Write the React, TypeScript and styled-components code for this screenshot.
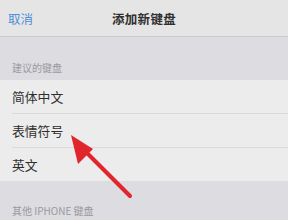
import React from 'react'
import styled, { createGlobalStyle } from 'styled-components'

const GlobalStyle = createGlobalStyle`
  html, body {
    margin: 0;
    padding: 0;
    background: #ffffff;
  }
  body {
    font-family: "Noto Sans CJK SC", "Noto Sans", sans-serif;
  }
`

const suggested = ['简体中文', '表情符号', '英文']

const Screen = styled.div`
  position: relative;
  width: 288px;
  height: 220px;
  overflow: hidden;
  display: flex;
  flex-direction: column;
  background: #dcdce1;
`

const NavBar = styled.div`
  height: 36px;
  flex-shrink: 0;
  display: grid;
  grid-template-columns: 1fr auto 1fr;
  align-items: center;
  padding: 0 8px;
  background: #e5e5e6;
  border-bottom: 1px solid #c9c9cc;
`

const NavButton = styled.span`
  font-size: 12.5px;
  color: #4e8fd8;
  justify-self: start;
`

const NavTitle = styled.span`
  font-size: 12.5px;
  font-weight: 700;
  color: #2f2f2f;
  letter-spacing: 0.3px;
`

const SectionHeader = styled.div<{ $height: number }>`
  height: ${(p) => p.$height}px;
  flex-shrink: 0;
  display: flex;
  align-items: flex-end;
  padding: 0 0 5px 12px;
  box-sizing: border-box;
  font-size: 10px;
  color: #9a9a9e;
`

const List = styled.div`
  background: #ececec;
  flex-shrink: 0;
`

const Row = styled.div`
  height: 33px;
  display: flex;
  align-items: center;
  margin-left: 12px;
  font-size: 12.8px;
  color: #2e2e2e;
  & + & {
    border-top: 1px solid #d9d9d9;
  }
`

const Overlay = styled.svg`
  position: absolute;
  left: 0;
  top: 0;
  pointer-events: none;
`

const App = () => {
  return (
    <>
      <GlobalStyle />
      <Screen>
        <NavBar>
          <NavButton>取消</NavButton>
          <NavTitle>添加新键盘</NavTitle>
          <span />
        </NavBar>
        <SectionHeader $height={43}>建议的键盘</SectionHeader>
        <List>
          {suggested.map((name) => (
            <Row key={name}>{name}</Row>
          ))}
        </List>
        <SectionHeader $height={42}>其他 IPHONE 键盘</SectionHeader>
        <Overlay width="288" height="220" viewBox="0 0 288 220">
          <line x1="130" y1="196" x2="82" y2="148" stroke="#e0252d" strokeWidth="4" strokeLinecap="round" />
          <polygon points="71,135 93,149 78,164" fill="#e0252d" />
        </Overlay>
      </Screen>
    </>
  )
}

export default App
